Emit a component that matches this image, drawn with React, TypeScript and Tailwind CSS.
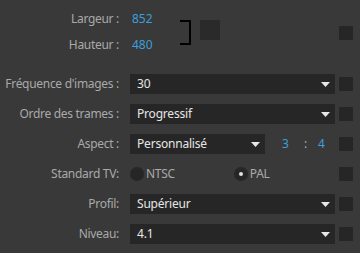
import React from "react";

const font = { fontFamily: '"Noto Sans", "Open Sans", sans-serif' };

function Check() {
  return <div className="w-[14px] h-[14px] bg-[#262626] shrink-0" />;
}

function Arrow() {
  return (
    <svg width="9" height="5" viewBox="0 0 9 5" className="shrink-0">
      <polygon points="0,0 9,0 4.5,5" fill="#e8e8e8" />
    </svg>
  );
}

function Select({ value, w }: { value: string; w: string }) {
  return (
    <div className={`${w} h-5 bg-[#262626] flex items-center justify-between pl-[7px] pr-[5px]`}>
      <span className="text-[#e6e6e6] text-[12px] leading-none tracking-[-0.2px]">{value}</span>
      <Arrow />
    </div>
  );
}

function Label({ children }: { children: React.ReactNode }) {
  return (
    <div className="w-[119px] shrink-0 text-right text-[#a9a9a9] text-[12px] leading-none whitespace-nowrap tracking-[-0.3px]">
      {children}
    </div>
  );
}

function Row({ label, children }: { label: string; children: React.ReactNode }) {
  return (
    <div className="flex items-center h-5">
      <Label>{label}</Label>
      <div className="ml-[11px] flex-1 flex items-center">{children}</div>
      <div className="ml-[4px] mr-[7px]">
        <Check />
      </div>
    </div>
  );
}

export default function App() {
  return (
    <div className="w-[360px] h-[253px] bg-[#393939] overflow-hidden" style={font}>
      <div className="flex items-center pt-[9px]">
        <div className="flex flex-col gap-[6px]">
          <div className="flex items-center h-5">
            <Label>Largeur :</Label>
            <span className="ml-[13px] w-[48px] text-[#3b9fdc] text-[12px] leading-none">852</span>
          </div>
          <div className="flex items-center h-5">
            <Label>Hauteur :</Label>
            <span className="ml-[13px] w-[48px] text-[#3b9fdc] text-[12px] leading-none">480</span>
          </div>
        </div>
        <div className="w-[11px] h-[25px] border-t-2 border-r-2 border-b-2 border-black rounded-tr-[1px] rounded-br-[1px] mt-[1px]" />
        <div className="ml-[9px] w-5 h-5 bg-[#2a2a2a] -mt-[4px]" />
        <div className="flex-1" />
        <div className="ml-[4px] mr-[7px] mt-[1px]">
          <Check />
        </div>
      </div>

      <div className="flex flex-col gap-[10px] mt-[19px]">
        <Row label="Fréquence d'images :">
          <Select value="30" w="w-full" />
        </Row>
        <Row label="Ordre des trames :">
          <Select value="Progressif" w="w-full" />
        </Row>
        <Row label="Aspect :">
          <Select value="Personnalisé" w="w-[135px]" />
          <span className="ml-[17px] text-[#3b9fdc] text-[12px] leading-none">3</span>
          <span className="ml-[15px] text-[#a9a9a9] text-[12px] leading-none">:</span>
          <span className="ml-[11px] text-[#3b9fdc] text-[12px] leading-none">4</span>
        </Row>
        <Row label="Standard TV:">
          <div className="w-[14px] h-[14px] rounded-full bg-[#262626]" />
          <span className="ml-[2px] text-[#a9a9a9] text-[12px] leading-none tracking-[-0.3px]">NTSC</span>
          <div className="ml-[59px] w-[14px] h-[14px] rounded-full bg-[#262626] flex items-center justify-center">
            <div className="w-[4px] h-[4px] rounded-full bg-[#e0e0e0]" />
          </div>
          <span className="ml-[2px] text-[#a9a9a9] text-[12px] leading-none tracking-[-0.3px]">PAL</span>
        </Row>
        <Row label="Profil:">
          <Select value="Supérieur" w="w-full" />
        </Row>
        <Row label="Niveau:">
          <Select value="4.1" w="w-full" />
        </Row>
      </div>
    </div>
  );
}
